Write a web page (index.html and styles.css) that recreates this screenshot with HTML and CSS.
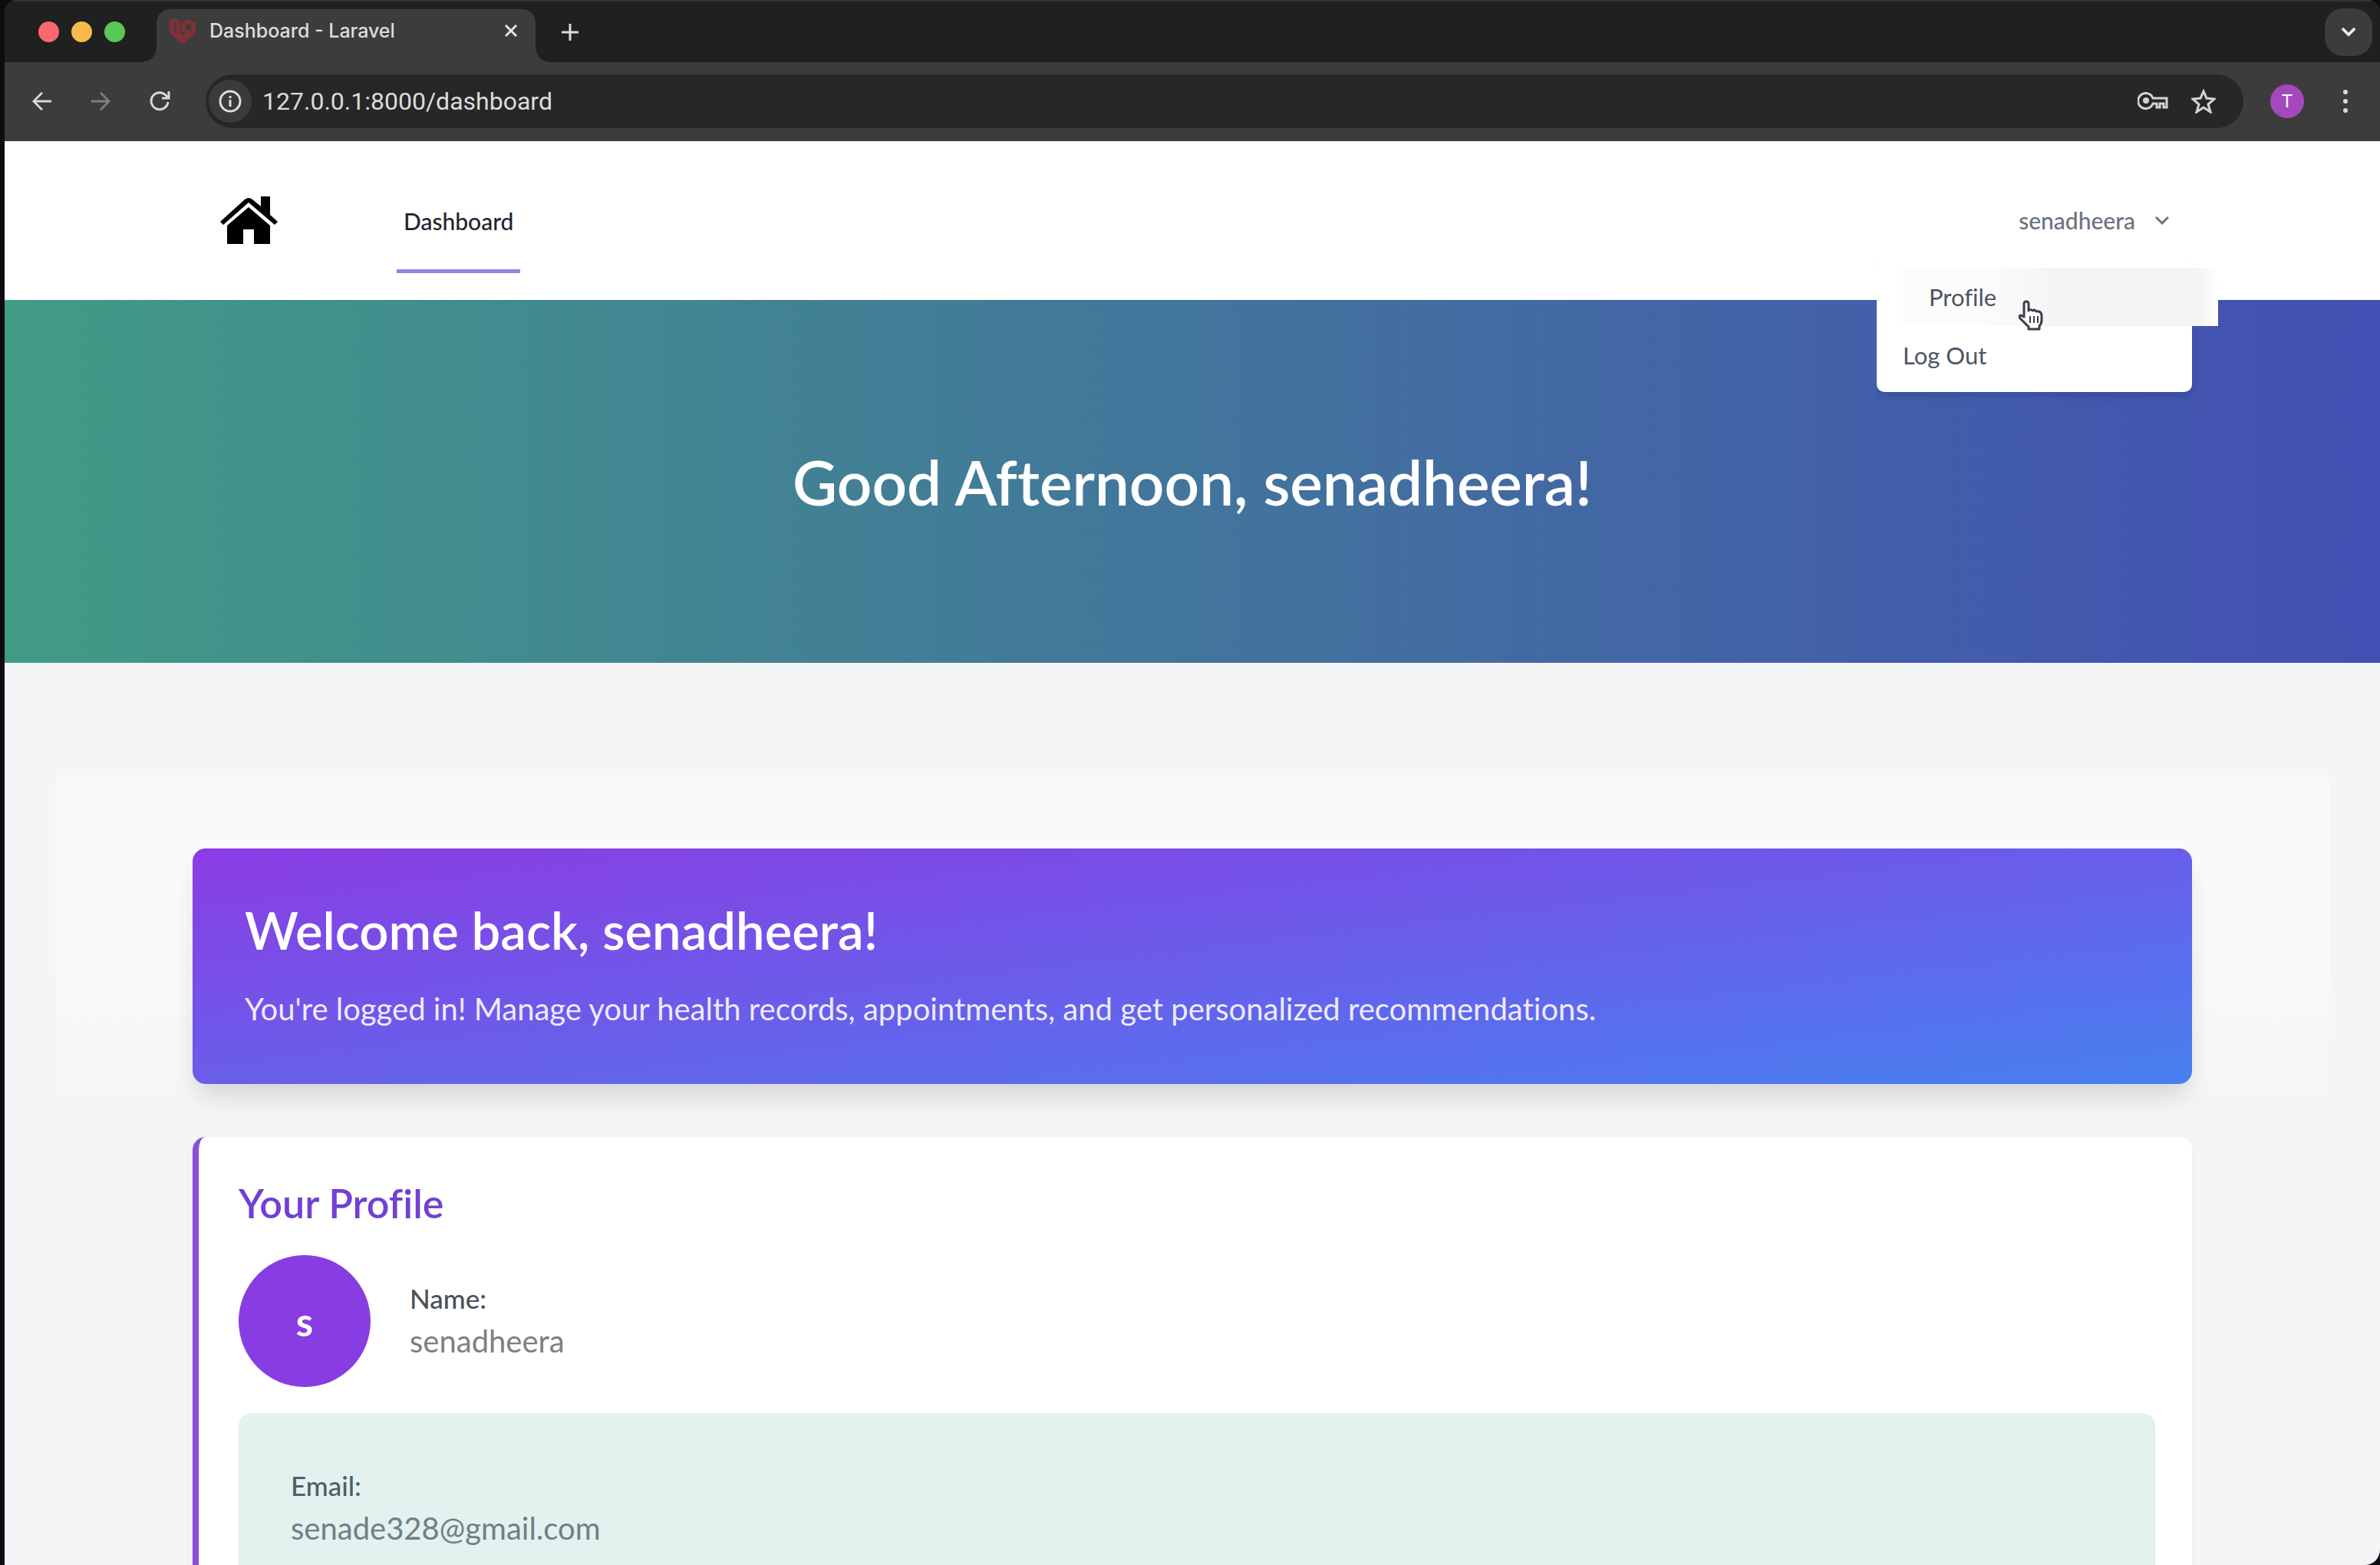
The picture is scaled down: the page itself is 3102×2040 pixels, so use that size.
FILE: index.html
```html
<!DOCTYPE html>
<html lang="en">
<head>
<meta charset="utf-8">
<title>Dashboard - Laravel</title>
<link rel="stylesheet" href="styles.css">
</head>
<body>
<div class="window">
  <div class="tabstrip">
    <div class="lights"><i class="light red"></i><i class="light amber"></i><i class="light green"></i></div>
    <div class="tab">
      <svg class="favicon" viewBox="0 0 36 36" fill="none" stroke="#7d3236" stroke-width="6" stroke-linejoin="round"><path d="M4 4l8 3v14l6 8 6-8v-4M4 4v16l14 12 14-12V9l-7-3-6 4v10"/></svg>
      <span class="tab-title">Dashboard - Laravel</span>
      <button class="plain" aria-label="Close tab"><svg width="16" height="16" viewBox="0 0 16 16" stroke="#e3e3e3" stroke-width="3"><path d="M1 1l14 14M15 1L1 15"/></svg></button>
    </div>
    <button class="plain new-tab" aria-label="New tab"><svg width="22" height="22" viewBox="0 0 22 22" stroke="#dcdcdc" stroke-width="3"><path d="M11 0v22M0 11h22"/></svg></button>
    <button class="plain tab-search" aria-label="Search tabs"><svg width="20" height="13" viewBox="0 0 22 14" fill="none" stroke="#f0f0f0" stroke-width="4"><path d="M2 2l9 9 9-9"/></svg></button>
  </div>

  <div class="toolbar">
    <div class="nav-buttons">
      <button class="plain" aria-label="Back"><svg width="26" height="26" viewBox="0 0 28 26" fill="none" stroke="#d8d8d8" stroke-width="3"><path d="M27 13H3M14 1L2 13l12 12"/></svg></button>
      <button class="plain" aria-label="Forward"><svg width="26" height="26" viewBox="0 0 28 26" fill="none" stroke="#7e7e7e" stroke-width="3"><path d="M1 13h24M14 1l12 12-12 12"/></svg></button>
      <button class="plain" aria-label="Reload"><svg width="28" height="28" viewBox="0 0 28 28" fill="none" stroke="#d8d8d8" stroke-width="3"><path d="M25 15a11 11 0 1 1-3-9l4 4M26 1v9h-9"/></svg></button>
    </div>
    <div class="omnibox">
      <span class="site-info"><svg width="30" height="30" viewBox="0 0 30 30" fill="none" stroke="#dcdcdc" stroke-width="3"><circle cx="15" cy="15" r="13"/><path d="M15 13v9M15 8v3"/></svg></span>
      <input class="url" aria-label="Address" value="127.0.0.1:8000/dashboard">
      <button class="plain" aria-label="Passwords"><svg width="40" height="24" viewBox="0 0 40 24" fill="none" stroke="#d4d4d4" stroke-width="3"><path d="M20 8h18v12h-4v-5h-5v5h-4v-5h-5a10 10 0 1 1 0-7z"/><circle cx="11" cy="11" r="4" fill="#d4d4d4" stroke="none"/></svg></button>
      <button class="plain" aria-label="Bookmark"><svg width="32" height="32" viewBox="0 0 32 32" fill="none" stroke="#d4d4d4" stroke-width="3"><path d="M16 3l4 9 10 1-8 7 3 10-9-6-9 6 3-10-8-7 10-1z"/></svg></button>
    </div>
    <button class="plain account" aria-label="Account">T</button>
    <button class="plain" aria-label="Menu"><svg width="8" height="32" viewBox="0 0 8 32" fill="#d8d8d8"><circle cx="4" cy="4" r="3"/><circle cx="4" cy="16" r="3"/><circle cx="4" cy="28" r="3"/></svg></button>
  </div>

  <div class="page">
    <nav class="site-nav">
      <div class="container nav-row">
        <a href="#" class="logo" aria-label="Home"><svg width="78" height="64" viewBox="0 0 78 64"><path d="M39 15L67 39v24H46V44H32v19H11V39z"/><path d="M2 34L34 5q5-4 10 0l11 9V1h12v24l10 9-4 4L39 9 6 38z"/></svg></a>
        <a href="#" class="nav-link">Dashboard</a>
        <div class="user">
          <button class="plain user-button">senadheera<svg width="18" height="12" viewBox="0 0 18 12" fill="none" stroke="#6b7280" stroke-width="3"><path d="M1 2l8 8 8-8"/></svg></button>
          <div class="menu">
            <a href="#" class="menu-item active">Profile</a>
            <a href="#" class="menu-item">Log Out</a>
            <svg class="pointer" width="34" height="40" viewBox="0 0 34 40" fill="#fff" stroke="#3d3d45" stroke-width="3" stroke-linejoin="round"><path d="M8 22V5q0-3 3-3t3 3v9q2-3 5 0 3-2 5 1 6-1 7 5v6q0 5-3 8v4H14v-3L3 24q-2-4 1-4z"/><path d="M16 21v9M21 21v9M26 21v9" stroke-width="2"/></svg>
          </div>
        </div>
      </div>
    </nav>

    <header class="hero"><h1>Good Afternoon, senadheera!</h1></header>

    <main class="content">
      <div class="container stack">
        <section class="welcome">
          <h2>Welcome back, senadheera!</h2>
          <p>You're logged in! Manage your health records, appointments, and get personalized recommendations.</p>
        </section>
        <section class="profile">
          <h3>Your Profile</h3>
          <div class="person">
            <div class="avatar">s</div>
            <dl class="field"><dt>Name:</dt><dd>senadheera</dd></dl>
          </div>
          <dl class="field email"><dt>Email:</dt><dd>senade328@gmail.com</dd></dl>
        </section>
      </div>
    </main>
  </div>
</div>
</body>
</html>
```
FILE: styles.css
```css
* { box-sizing: border-box; }
body {
  margin: 0;
  background: #0d0a10;
  font-family: Lato, "Liberation Sans", sans-serif;
  font-variant-ligatures: none;
  color: #374151;
}
h1, h2, h3, p, dl, dd { margin: 0; }
a { color: inherit; text-decoration: none; }
svg { display: block; flex: none; }
.plain {
  display: flex;
  align-items: center;
  justify-content: center;
  padding: 0;
  border: 0;
  background: none;
  font: inherit;
  color: inherit;
}

.window {
  display: flex;
  flex-direction: column;
  height: 100vh;
  margin-left: 6px;
  border-radius: 16px 16px 20px 0;
  overflow: hidden;
  background: #3c3c3c;
}

/* Tab strip */
.tabstrip {
  display: flex;
  align-items: center;
  height: 81px;
  padding: 0 10px 0 44px;
  background: #202020;
  border-top: 2px solid #333;
}
.lights { display: flex; gap: 16px; margin-right: 41px; }
.light { width: 27px; height: 27px; border-radius: 50%; }
.red { background: #f9696b; }
.amber { background: #f8bb4b; }
.green { background: #5ac855; }
.tab {
  position: relative;
  display: flex;
  align-items: center;
  align-self: flex-end;
  width: 494px;
  height: 69px;
  padding: 0 24px 14px 16px;
  border-radius: 18px 18px 0 0;
  background: #3c3c3c;
}
.tab::before, .tab::after {
  content: "";
  position: absolute;
  bottom: 0;
  width: 18px;
  height: 18px;
}
.tab::before { right: 100%; background: radial-gradient(circle at 0 0, #202020 17px, #3c3c3c 18px); }
.tab::after { left: 100%; background: radial-gradient(circle at 100% 0, #202020 17px, #3c3c3c 18px); }
.favicon { width: 36px; height: 36px; margin-right: 17px; }
.tab-title {
  flex: 1;
  font: 500 25px/32px Inter, sans-serif;
  color: #dedede;
}
.new-tab { margin-left: 34px; }
.tab-search {
  width: 62px;
  height: 62px;
  margin-left: auto;
  border-radius: 24px;
  background: #3c3c3c;
}

/* Toolbar */
.toolbar {
  display: flex;
  align-items: center;
  height: 103px;
  padding: 0 41px 2px 36px;
}
.nav-buttons { display: flex; gap: 50px; margin-right: 46px; }
.omnibox {
  display: flex;
  flex: 1;
  align-items: center;
  gap: 30px;
  height: 70px;
  margin-right: 35px;
  padding: 0 36px 0 4px;
  border-radius: 35px;
  background: #272727;
}
.site-info {
  display: grid;
  place-items: center;
  width: 56px;
  height: 56px;
  margin-right: -16px;
  border-radius: 50%;
  background: #3a3a3a;
}
.url {
  flex: 1;
  min-width: 0;
  padding: 0;
  border: 0;
  outline: 0;
  background: none;
  color: #dcdcdc;
  font: 32px/40px Roboto, sans-serif;
}
.account {
  width: 44px;
  height: 44px;
  margin-right: 50px;
  border-radius: 50%;
  background: #a449bd;
  color: #fff;
  font: 24px/44px Roboto, sans-serif;
}

/* Site navigation */
.page {
  flex: 1;
  min-height: 0;
  overflow: hidden;
  background: #f4f5f6;
}
.container { max-width: 2606px; margin: 0 auto; }
.site-nav { height: 207px; background: #fff; }
.nav-row {
  display: flex;
  align-items: center;
  height: 206px;
  padding-left: 34px;
}
.nav-link {
  margin-left: 154px;
  padding: 46px 9px 40px;
  border-bottom: 5px solid #9184e0;
  font-size: 30px;
  line-height: 46px;
  font-weight: 500;
  color: #1f2430;
}
.user { position: relative; margin-left: auto; }
.user-button {
  gap: 26px;
  padding: 0 30px;
  font-size: 30px;
  line-height: 42px;
  font-weight: 500;
  color: #6b7280;
}
/* The shadow is clipped above the menu so it blends into the white bar */
.menu {
  position: absolute;
  z-index: 1;
  top: 75px;
  right: 0;
  width: 411px;
  padding: 8px 0 10px;
  border-radius: 10px;
  background: #fff;
  box-shadow: 0 6px 10px rgba(30, 35, 100, .2);
  clip-path: inset(0 -40px -20px 0);
}
.menu-item {
  display: block;
  padding: 17px 34px;
  font-size: 31px;
  line-height: 42px;
  color: #4b5563;
}
.menu-item.active {
  transform: translateX(34px);
  background: linear-gradient(90deg, #fcfcfd 25%, #f3f4f6 50%, #f3f4f6 94%, #fff);
}
.pointer { position: absolute; left: 184px; top: 50px; }

/* Hero */
.hero {
  display: grid;
  place-items: center;
  height: 473px;
  background: linear-gradient(90deg, #419b85, #434fb3);
  color: #fff;
}
.hero h1 { font-size: 80px; line-height: 86px; font-weight: 600; }

/* Content */
.content {
  margin: 0 66px;
  padding-top: 242px;
  background: linear-gradient(180deg, transparent 140px, #fafafb 160px, #fafafb 360px, transparent 580px);
}
.stack { display: grid; gap: 69px; }
.welcome {
  display: grid;
  gap: 34px;
  padding: 68px;
  border-radius: 17px;
  background: linear-gradient(to bottom right, #8b3ce4, #4780f0);
  box-shadow: 0 20px 32px -6px rgba(0, 0, 0, .14);
  color: #fff;
}
.welcome h2 { font-size: 67px; line-height: 77px; font-weight: 600; }
.welcome p { font-size: 40px; line-height: 60px; color: #efeafd; }
.profile {
  padding: 52px 48px 52px 52px;
  border-left: 8px solid #8a4fdc;
  border-radius: 17px;
  background: #fff;
  box-shadow: 0 8px 14px rgba(0, 0, 0, .03);
}
.profile h3 {
  font-size: 52px;
  line-height: 68px;
  font-weight: 600;
  color: #7140d4;
}
.person {
  display: flex;
  align-items: center;
  gap: 51px;
  margin: 34px 0;
}
.avatar {
  width: 172px;
  height: 172px;
  border-radius: 50%;
  background: #883de2;
  color: #fff;
  font-size: 51px;
  line-height: 174px;
  font-weight: 700;
  text-align: center;
}
.field { line-height: 56px; }
.field dt { font-size: 35px; font-weight: 500; color: #4b5158; }
.field dd { font-size: 40px; color: #7b8085; }
.person .field { padding-bottom: 4px; }
.email {
  padding: 66px 68px;
  border-radius: 17px;
  background: #e3f1ef;
}
.email dt { color: #4e5f66; }
.email dd { color: #6f8085; }
```
